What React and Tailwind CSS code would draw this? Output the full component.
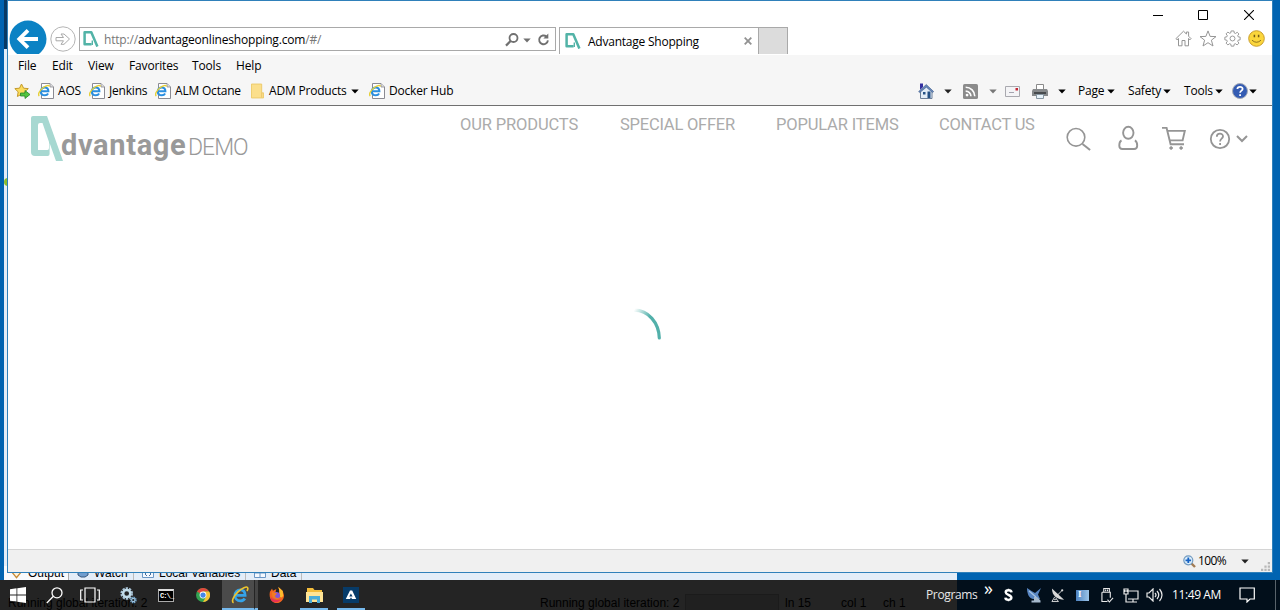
import React from "react";

const UI = "font-['Open_Sans','Noto_Sans',sans-serif]";

function LogoMark({ className }) {
  return (
    <svg viewBox="0 0 32 45" className={className} preserveAspectRatio="none">
      <path
        fillRule="evenodd"
        fill="#a7d8d1"
        d="M2 0H16L32 45H25L18.6 27V38Q18.6 40 16.6 40H4Q0 40 0 36V2Q0 0 2 0ZM9 7Q7 7 7 9V34H16.5Q18 34 18 32V26L11.5 7Z"
      />
    </svg>
  );
}

function Favicon({ className }) {
  return (
    <svg viewBox="0 0 16 16" className={className} fill="none" stroke="#52b3a7">
      <path strokeWidth="2.5" strokeLinejoin="round" d="M8.6 13.2H1.6V1.3H8.3L14.4 15.6" />
      <path strokeWidth="1.4" d="M9.3 13.9V9.5" />
    </svg>
  );
}

function Caret({ className = "text-[#222]" }) {
  return (
    <svg viewBox="0 0 8 5" className={"h-[5px] w-[8px] shrink-0 " + className}>
      <path fill="currentColor" d="M0.3 0.5H7.7L4 4.5Z" />
    </svg>
  );
}

function BrowserE({ className }) {
  return (
    <svg viewBox="0 0 18 18" className={className}>
      <path
        fill="none"
        stroke="#35a3e8"
        strokeWidth="2.8"
        d="M4.2 9.4H14.1C14.2 5.6 12.3 3.9 9.4 3.9C6.2 3.9 4 6.3 4 9.4C4 12.5 6.2 14.9 9.3 14.9C11.4 14.9 12.9 14.1 13.8 12.5"
      />
      <path
        fill="none"
        stroke="#f0c52c"
        strokeWidth="1.6"
        d="M2.6 16.8C.2 15.6 2.2 10.4 7 5.8C11.3 1.7 15.6.2 16.6 1.6C17.1 2.4 16.8 3.7 16 5"
      />
    </svg>
  );
}

function PageIcon() {
  return (
    <svg viewBox="0 0 16 16" className="h-4 w-4 shrink-0">
      <path fill="#fff" stroke="#8b8b93" d="M3.5.5H12L15.5 4V15.5H3.5Z" />
      <path fill="#ddd" stroke="#8b8b93" strokeWidth=".8" d="M12 .5V4H15.5" />
      <path
        fill="none"
        stroke="#2b8fe0"
        strokeWidth="2"
        d="M3 8.3H10.4C10.4 5.7 9 4.4 6.8 4.4C4.5 4.4 2.8 6 2.8 8.4C2.8 10.8 4.5 12.2 6.8 12.2C8.3 12.2 9.5 11.6 10.1 10.5"
      />
      <path
        fill="none"
        stroke="#e6cf35"
        strokeWidth="1.4"
        d="M1.3 13C-.6 11.6 1.8 7.3 5 4.8C8 2.4 11 1.8 11.4 3.4"
      />
    </svg>
  );
}

function Bookmark({ children, className }) {
  return (
    <div className={"flex shrink-0 items-center gap-[4px] " + className}>
      <PageIcon />
      <span>{children}</span>
    </div>
  );
}

function TitleRow() {
  return (
    <div className="flex h-[54px] shrink-0 items-start bg-white">
      <div className="mt-[19px] h-[34px] w-[41px] shrink-0 overflow-hidden pl-[1px]">
        <svg viewBox="0 0 38 38" className="h-[38px] w-[38px]">
          <circle cx="19" cy="19" r="18.5" fill="#0b82c4" />
          <path
            fill="none"
            stroke="#fff"
            strokeWidth="3.8"
            d="M29 19H11M19 10.3L10.3 19L19 27.7"
          />
        </svg>
      </div>
      <svg viewBox="0 0 26 26" className="mt-[25px] h-[26px] w-[27px] shrink-0">
        <circle cx="13.5" cy="13" r="12.2" fill="#fff" stroke="#b4b4b4" />
        <path
          fill="#fff"
          stroke="#a9a9a9"
          d="M6.5 11.5H14L11.5 8H14.5L20 13L14.5 18.3H11.5L14 14.8H6.5Z"
        />
      </svg>
      <div className="ml-[3px] mt-[26px] flex h-[24px] w-[477px] shrink-0 items-center border border-[#a9a9a9] bg-white">
        <Favicon className="ml-[3px] h-[16px] w-[16px] shrink-0" />
        <span className="ml-[5px] mt-[1px] w-[401px] text-[12px] tracking-[-0.18px] text-[#777]">
          http://<span className="text-black">advantageonlineshopping.com</span>/#/
        </span>
        <svg viewBox="0 0 14 14" className="mt-[1px] h-[14px] w-[14px] shrink-0 text-[#707070]">
          <circle cx="8.5" cy="5" r="4" fill="none" stroke="currentColor" strokeWidth="1.8" />
          <path stroke="currentColor" strokeWidth="2.2" d="M5.6 8L1 12.6" />
        </svg>
        <Caret className="ml-[4px] mt-[2px] text-[#707070]" />
        <svg viewBox="0 0 14 14" className="ml-[6px] mt-[1px] h-[14px] w-[14px] shrink-0 text-[#707070]">
          <path
            fill="none"
            stroke="currentColor"
            strokeWidth="1.9"
            d="M9.4 3.5A4.4 4.4 0 1 0 10.9 7.4"
          />
          <path fill="currentColor" d="M11.3 .6V5.6H6.4Z" />
        </svg>
      </div>
      <div className="ml-[3px] mt-[26px] flex h-[27px] w-[200px] shrink-0 items-center border border-b-0 border-[#a9a9a9] bg-white">
        <Favicon className="ml-[5px] h-[16px] w-[16px] shrink-0" />
        <span className="ml-[7px] mt-[2px] w-[156px] whitespace-nowrap text-[12px] tracking-[-0.23px] text-black">
          Advantage Shopping
        </span>
        <svg viewBox="0 0 8 8" className="h-[8px] w-[8px] shrink-0">
          <path stroke="#929292" strokeWidth="1.8" d="M.7.7L7.3 7.3M7.3.7L.7 7.3" />
        </svg>
      </div>
      <div className="mt-[26px] h-[27px] w-[29px] shrink-0 border border-b-0 border-l-0 border-[#a9a9a9] bg-[#dcdcdc]" />
      <div className="ml-auto flex flex-col items-end">
        <div className="mt-[9px] flex items-center pr-[18px] text-black">
          <svg viewBox="0 0 10 10" className="mr-[35px] h-[10px] w-[10px]">
            <path stroke="currentColor" d="M0 5.5H10" />
          </svg>
          <svg viewBox="0 0 10 10" className="mr-[36px] h-[10px] w-[10px]">
            <path fill="none" stroke="currentColor" d="M.5.5H9.5V9.5H.5Z" />
          </svg>
          <svg viewBox="0 0 10 10" className="h-[10px] w-[10px]">
            <path stroke="currentColor" strokeWidth="1.1" d="M0 0L10 10M10 0L0 10" />
          </svg>
        </div>
        <div className="mt-[10px] flex items-center gap-[7px] pr-[7px] text-[#959595]">
          <svg viewBox="0 0 17 17" className="h-[17px] w-[17px]" fill="#fff" stroke="currentColor">
            <path d="M8.5 1.2L.9 8.7L2 9.8L3.5 8.5V15.8H7V10.5H10V15.8H13.5V8.5L15 9.8L16.1 8.7L13.6 6.2V2H11.4V4Z" />
          </svg>
          <svg viewBox="0 0 18 17" className="h-[17px] w-[18px]" fill="#fff" stroke="currentColor">
            <path d="M9 .9L11.1 6.4L17 6.6L12.4 10.2L14 16L9 12.7L4 16L5.6 10.2L1 6.6L6.9 6.4Z" />
          </svg>
          <svg viewBox="0 0 18 18" className="h-[17px] w-[17px]" fill="#fff" stroke="currentColor">
            <path d="M7.5 1H10.5L10.9 3.2L12.1 3.7L14 2.4L15.8 4.2L14.5 6L15 7.2L17.1 7.6V10.4L15 10.8L14.5 12L15.8 13.9L13.9 15.8L12 14.5L10.8 15L10.4 17.1H7.6L7.2 15L6 14.5L4.1 15.8L2.2 13.9L3.5 12L3 10.8L.9 10.4V7.6L3 7.2L3.5 6L2.2 4.1L4.1 2.2L6 3.5L7.2 3Z" />
            <circle cx="9" cy="9" r="2.6" />
          </svg>
          <svg viewBox="0 0 17 17" className="h-[17px] w-[17px]">
            <circle cx="8.5" cy="8.5" r="7.8" fill="#fbd63c" stroke="#c99d2c" />
            <path stroke="#755b16" strokeWidth="1.5" d="M6.4 4.8V7.3M10.6 4.8V7.3" />
            <path fill="none" stroke="#755b16" strokeWidth=".8" d="M4 10.2Q8.5 14.3 13 10.2" />
          </svg>
        </div>
      </div>
    </div>
  );
}

function MenuRow() {
  return (
    <div className="flex h-[22px] shrink-0 items-center pl-[10px] text-[12px] tracking-[-0.15px] text-black">
      <span className="w-[34px]">File</span>
      <span className="w-[36px]">Edit</span>
      <span className="w-[41px]">View</span>
      <span className="w-[63px]">Favorites</span>
      <span className="w-[44px]">Tools</span>
      <span>Help</span>
    </div>
  );
}

function CommandBar() {
  return (
    <div className="flex h-[28px] shrink-0 items-center whitespace-nowrap pl-[6px] text-[12px] tracking-[-0.2px] text-black">
      <svg viewBox="0 0 17 16" className="mr-[7px] h-[16px] w-[17px] shrink-0">
        <path
          fill="#fbdc5c"
          stroke="#c49a2b"
          d="M7.5 1L9.6 5.2L14.3 5.6L10.9 8.9L11.9 13.5L7.5 11.2L3.4 13.5L4.2 8.9L.8 5.6L5.5 5.2Z"
        />
        <path fill="#53c43e" stroke="#24852a" strokeWidth=".8" d="M6.5 10H11V7.5L16 11.5L11 15.5V13H6.5Z" />
      </svg>
      <Bookmark className="w-[51px]">AOS</Bookmark>
      <Bookmark className="w-[66px]">Jenkins</Bookmark>
      <Bookmark className="w-[96px]">ALM Octane</Bookmark>
      <svg viewBox="0 0 14 16" className="mr-[5px] h-[16px] w-[13px] shrink-0">
        <path fill="#fbdf8c" stroke="#ecc968" d="M.5.5H11.5V10H13.5V15.5H.5Z" />
        <path stroke="#eac466" d="M11.5 10V15" />
      </svg>
      <span className="w-[82px] shrink-0">ADM Products</span>
      <Caret className="mr-[10px]" />
      <Bookmark className="w-[90px]">Docker Hub</Bookmark>

      <div className="ml-auto flex items-center">
        <svg viewBox="0 0 16 16" className="h-[16px] w-[16px]">
          <path fill="#e3edf7" stroke="#6c7f98" d="M2.5 8V15.5H14V8L8.5 3Z" />
          <path fill="#6787b8" stroke="#435f8c" strokeWidth=".6" d="M8.3 1.5L.6 8.6L1.8 9.6L8.3 4.2L14.6 9.6L15.7 8.6Z" />
          <path fill="#3430a0" d="M2 .5H5V4L2 6.8Z" />
          <path fill="#255185" d="M9.5 8.5H12.5V15H9.5ZM5 9H7.5V11.5H5Z" />
        </svg>
        <Caret className="ml-[10px] mr-[11px] text-[#222]" />
        <svg viewBox="0 0 14 14" className="mt-[1px] h-[15px] w-[15px]">
          <rect width="14" height="14" rx="1.5" fill="#8b8b8b" />
          <g fill="none" stroke="#fff" strokeWidth="1.5">
            <path d="M2.5 6.6A4.9 4.9 0 0 1 7.4 11.5M2.5 3A8.5 8.5 0 0 1 11 11.5" />
          </g>
          <circle cx="3.8" cy="10.3" r="1.3" fill="#fff" />
        </svg>
        <Caret className="ml-[11px] mr-[8px] text-[#777]" />
        <svg viewBox="0 0 15 11" className="h-[11px] w-[15px]">
          <path fill="#f4f4f6" stroke="#a9a9af" d="M.5.5H14.5V10.5H.5Z" />
          <path fill="#c42836" d="M10.5 2H13V4.5H10.5Z" />
          <path stroke="#a4a4af" d="M4 6.5H9" />
        </svg>
        <svg viewBox="0 0 16 15" className="ml-[12px] h-[15px] w-[16px]">
          <path fill="#fff" stroke="#8a8a8a" d="M4.5.5H11.5V6H4.5Z" />
          <path fill="#86898b" d="M1 5H15L16 7V12H0V7Z" />
          <path fill="#484b4e" d="M2 8H14V10H2Z" />
          <path fill="#e7f2fa" stroke="#8796a1" d="M4.5 10.5H11.5V14.5H4.5Z" />
        </svg>
        <Caret className="ml-[10px] mr-[12px]" />
        <span className="w-[29px]">Page</span>
        <Caret className="mr-[13px]" />
        <span className="w-[35px]">Safety</span>
        <Caret className="mr-[13px]" />
        <span className="w-[31px]">Tools</span>
        <Caret className="mr-[9px]" />
        <svg viewBox="0 0 16 16" className="h-[16px] w-[16px]">
          <circle cx="8" cy="8" r="7.5" fill="#345cb3" stroke="#a5acb8" />
          <path fill="none" stroke="#fff" strokeWidth="1.8" d="M5.4 6C5.5 3 10.8 3.1 10.6 6C10.5 7.6 8.1 7.7 8.1 9.8M8.1 11.2V13" />
        </svg>
        <Caret className="ml-[1px] mr-[15px]" />
      </div>
    </div>
  );
}

function SiteHeader() {
  return (
    <header className="flex h-[70px] items-start font-[Roboto,sans-serif]">
      <div className="ml-[23px] mt-[10px] flex h-[50px] w-[429px] items-start">
        <LogoMark className="h-[45px] w-[32px] shrink-0" />
        <span className="-ml-[2px] mt-[12px] w-[127px] shrink-0 text-[29px] font-bold leading-[34px] tracking-[0.65px] text-[#999]">
          dvantage
        </span>
        <span className="mt-[17px] text-[23px] font-light leading-[30px] tracking-[-1px] text-[#999]">
          DEMO
        </span>
      </div>
      <nav className="mt-[9px] flex whitespace-nowrap text-[16.5px] font-normal leading-[20px] tracking-[-0.14px] text-[#ababab]">
        <span className="w-[160px]">OUR PRODUCTS</span>
        <span className="w-[156px] tracking-[-0.22px]">SPECIAL OFFER</span>
        <span className="w-[163px] tracking-[-0.16px]">POPULAR ITEMS</span>
        <span className="w-[127px] tracking-[-0.25px]">CONTACT US</span>
      </nav>
      <div className="mt-[18px] flex items-start text-[#959595]">
        <svg viewBox="0 0 26 28" className="h-[28px] w-[26px]" fill="none" stroke="currentColor">
          <circle cx="10" cy="13.3" r="8.8" strokeWidth="1.6" />
          <path strokeWidth="2" d="M16.5 20L24.1 26" />
        </svg>
        <svg viewBox="0 0 22 28" className="ml-[25px] h-[28px] w-[22px]" fill="none" stroke="currentColor" strokeWidth="1.9">
          <ellipse cx="11.3" cy="8.8" rx="5.2" ry="6" />
          <path d="M4.5 16.3C2.6 17.3 2.2 19 2.3 21.8C2.3 24.2 3.6 25 5.4 25H17.1C18.9 25 20.2 24.2 20.2 21.8C20.3 19 19.8 17.3 17.9 16.3" />
        </svg>
        <svg viewBox="0 0 25 28" className="ml-[23px] h-[28px] w-[25px]" fill="none" stroke="currentColor" strokeWidth="1.9">
          <path d="M0 3.9H4.6L8.6 20.2H22M6 6.9H22.8L20.6 16.4H8" />
          <circle cx="9.1" cy="24" r="1.3" fill="currentColor" strokeWidth="1" />
          <circle cx="19.1" cy="24" r="1.3" fill="currentColor" strokeWidth="1" />
        </svg>
        <svg viewBox="0 0 22 28" className="ml-[22px] h-[28px] w-[22px]" fill="none" stroke="currentColor" strokeWidth="1.8">
          <circle cx="11" cy="15" r="9.2" />
          <path d="M7.8 12.8C7.8 8.6 14.2 8.8 14 12.4C13.9 14.6 11.1 14.8 11.1 17.4M11.1 19.1V21.1" />
        </svg>
        <svg viewBox="0 0 12 8" className="ml-[5px] mt-[11px] h-[8px] w-[12px]" fill="none" stroke="currentColor" strokeWidth="2">
          <path d="M1 1L6 6L11 1" />
        </svg>
      </div>
    </header>
  );
}

function Spinner() {
  return (
    <svg viewBox="0 0 30 33" className="ml-[626px] mt-[131px] h-[33px] w-[30px]" fill="none">
      <defs>
        <linearGradient id="arc" x1="0" y1="0" x2=".55" y2=".35">
          <stop offset="0" stopColor="#52b0aa" stopOpacity="0" />
          <stop offset="1" stopColor="#52b0aa" />
        </linearGradient>
      </defs>
      <path stroke="url(#arc)" strokeWidth="3.2" strokeLinecap="round" d="M0 3.2C14.4 3 24.9 16 25.3 31" />
    </svg>
  );
}

function StatusBar() {
  return (
    <div className="flex h-[23px] shrink-0 items-center border-t border-[#d4d4d4] bg-[#f0f0f0] text-[12px] text-black">
      <svg viewBox="0 0 13 13" className="ml-auto h-[13px] w-[13px]">
        <path stroke="#a27b53" strokeWidth="2.4" d="M8 8L12 12" />
        <circle cx="5.3" cy="5.3" r="4.5" fill="#dceefa" stroke="#729ac0" strokeWidth="1.2" />
        <path stroke="#1662c4" strokeWidth="1.8" d="M2.5 5.3H8.1M5.3 2.5V8.1" />
      </svg>
      <span className="ml-[2px] w-[43px] tracking-[-0.6px]">100%</span>
      <Caret />
      <svg viewBox="0 0 8 8" className="ml-[12px] mr-[2px] mt-[10px] h-[9px] w-[9px]" fill="#b8b8b8">
        <path d="M6 0H8V2H6ZM3 3H5V5H3ZM6 3H8V5H6ZM0 6H2V8H0ZM3 6H5V8H3ZM6 6H8V8H6Z" />
      </svg>
    </div>
  );
}

function BrowserWindow() {
  return (
    <div className="absolute left-[7px] top-0 flex h-[573px] w-[1266px] flex-col border border-[#2f80ba] bg-[#f6f6f6]">
      <TitleRow />
      <MenuRow />
      <CommandBar />
      <main className="min-h-0 flex-1 border-t border-[#707070] bg-white">
        <SiteHeader />
        <Spinner />
      </main>
      <StatusBar />
    </div>
  );
}

function BackgroundApp() {
  return (
    <div className="absolute left-[4px] top-0 h-[610px] w-[953px] bg-[#e3edf8] font-['Liberation_Sans',sans-serif] text-[12px] text-black">
      <div className="h-[49px] w-[3px] bg-[#083964]" />
      <div className="mt-[129px] h-[8px] w-[4px] rounded-l bg-[#8bbd2d]" />
      <div className="mt-[380px] flex h-[14px] items-center leading-[14px]">
        <div className="flex h-full w-[65px] items-center gap-[6px] border-r border-[#aaa] bg-[#f8fafc] pl-[7px]">
          <svg viewBox="0 0 12 12" className="h-[12px] w-[11px]">
            <path fill="#fff2d9" stroke="#c58a36" strokeWidth="1.5" d="M1 5H3V1H9V5H11L6 11Z" />
          </svg>
          <span>Output</span>
        </div>
        <div className="flex w-[65px] items-center gap-[5px] border-r border-[#bbb] pl-[8px]">
          <svg viewBox="0 0 12 12" className="h-[12px] w-[12px]">
            <path fill="#719dcd" stroke="#36567c" d="M1 2H11V8L8 10H4L1 8Z" />
          </svg>
          <span>Watch</span>
        </div>
        <div className="flex w-[112px] items-center gap-[5px] border-r border-[#bbb] pl-[8px]">
          <svg viewBox="0 0 12 12" className="h-[12px] w-[12px]">
            <path fill="#f4f9ff" stroke="#6b96c5" d="M.5 1H11.5V10.5H.5Z" />
            <path fill="none" stroke="#466f9f" d="M5 5L3 7L5 9M7 5L9 7L7 9" />
          </svg>
          <span className="whitespace-nowrap">Local Variables</span>
        </div>
        <div className="flex w-[56px] items-center gap-[5px] border-r border-[#bbb] pl-[8px]">
          <svg viewBox="0 0 12 12" className="h-[12px] w-[12px]">
            <path fill="#f4f9ff" stroke="#6b96c5" d="M.5 1H11.5V10.5H.5ZM6 1V10M1 6H11" />
          </svg>
          <span>Data</span>
        </div>
      </div>
    </div>
  );
}

function Task({ children, className }) {
  return (
    <div className={"flex h-[30px] shrink-0 items-center justify-center border-b-2 pt-[2px] " + className}>
      {children}
    </div>
  );
}

function ShadowStatus() {
  return (
    <div className="absolute left-0 top-0 flex h-[30px] w-[957px] items-center overflow-hidden bg-[#242424] pl-[8px] pt-[17px] font-['Liberation_Sans',sans-serif] text-[12px] leading-[15px] text-black">
      <span className="w-[532px] shrink-0">Running global iteration: 2</span>
      <span className="w-[145px] shrink-0">Running global iteration: 2</span>
      <span className="mr-[6px] h-[20px] w-[94px] shrink-0 border border-[#1b1b1b] bg-[#202020]" />
      <span className="w-[56px] shrink-0">ln 15</span>
      <span className="w-[42px] shrink-0">col 1</span>
      <span>ch 1</span>
    </div>
  );
}

function Taskbar() {
  return (
    <div className="absolute left-0 top-[580px] h-[30px] w-[1280px] bg-[#020f1b] text-white">
      <ShadowStatus />
      <div className="relative flex h-full items-center">
        <Task className="w-[36px] border-transparent">
          <svg viewBox="0 0 16 16" className="h-[16px] w-[16px]" fill="#fff">
            <path d="M0 2.3L6.5 1.3V7.5H0ZM7.3 1.2L16 0V7.5H7.3ZM0 8.4H6.5V14.6L0 13.7ZM7.3 8.4H16V16L7.3 14.8Z" />
          </svg>
        </Task>
        <Task className="w-[36px] border-transparent">
          <svg viewBox="0 0 17 17" className="h-[17px] w-[17px]" fill="none" stroke="#fff" strokeWidth="1.3">
            <circle cx="11" cy="5.8" r="5" />
            <path d="M7.4 9.3L.8 16" />
          </svg>
        </Task>
        <Task className="w-[36px] border-transparent">
          <svg viewBox="0 0 20 16" className="h-[16px] w-[20px]" fill="none" stroke="#fff" strokeWidth="1.2">
            <path d="M5 1H15V15H5ZM3 3H.7V13H3M17 3H19.3V13H17" />
          </svg>
        </Task>
        <Task className="w-[40px] border-transparent">
          <svg viewBox="0 0 17 17" className="h-[17px] w-[17px]" fill="none">
            <circle cx="6.7" cy="6.5" r="5.4" stroke="#a9c4d7" strokeWidth="1.8" strokeDasharray="2.3 1.1" />
            <circle cx="6.7" cy="6.5" r="3.6" stroke="#c1dbe9" strokeWidth="2.5" />
            <circle cx="13.3" cy="13" r="2.7" stroke="#75a8cf" strokeWidth="1.4" strokeDasharray="1.4 .7" />
            <circle cx="13.3" cy="13" r="1.7" stroke="#9dc5e1" strokeWidth="1.2" />
          </svg>
        </Task>
        <Task className="w-[36px] border-transparent">
          <div className="h-[13px] w-[16px] border border-[#aaa] border-t-[2px] border-t-[#ddd] bg-black pl-[1px] pt-[1px] font-['Liberation_Mono',monospace] text-[7px] font-bold leading-[8px] tracking-[-0.9px]">
            C:\_
          </div>
        </Task>
        <Task className="w-[38px] border-transparent">
          <svg viewBox="0 0 16 16" className="h-[14px] w-[14px]">
            <circle cx="8" cy="8" r="8" fill="#33a252" />
            <path fill="#df493c" d="M8 8L1.1 4A8 8 0 0 1 15 4H8Z" />
            <path fill="#f5c235" d="M8 4H15A8 8 0 0 1 8 16L11.5 10Z" />
            <circle cx="8" cy="8" r="3.9" fill="#fff" />
            <circle cx="8" cy="8" r="3" fill="#4387e9" />
          </svg>
        </Task>
        <Task className="w-[32px] border-[#76b9ed] bg-[#4b4b4b] pl-[3px]">
          <BrowserE className="h-[18px] w-[18px]" />
        </Task>
        <div className="h-[30px] w-[4px] shrink-0 border-b-2 border-l border-b-[#76b9ed] border-l-[#242424] bg-[#444]" />
        <Task className="w-[38px] border-transparent">
          <svg viewBox="0 0 17 17" className="h-[16px] w-[16px]">
            <path fill="#f3661e" d="M1 5L3.2 1.5L4.2 4L7.8 2L7 5.2L10.6 8L11 4.3L10 0L14.6 4.2L16 8.7C16 13.3 12.5 17 8.2 17C3.2 17-.5 12.2 1 5Z" />
            <path fill="#e73253" d="M1 7C1 13 7 15 13 13C10 17 5 17.5 2.2 13.8Z" />
            <path fill="#fcbc2e" d="M10 0L14.6 4.2L15 9C14 12 12 11.5 11.2 9.4L11 4.3Z" />
            <circle cx="8" cy="9" r="3.8" fill="#8656d2" />
            <path fill="#f37b22" d="M3 5L8.5 7L6.3 9.5C7 12 10 12.2 12 10.8C10 14 4 13 3.4 9Z" />
          </svg>
        </Task>
        <Task className="ml-[4px] w-[28px] border-[#76b9ed]">
          <svg viewBox="0 0 17 15" className="h-[15px] w-[17px]">
            <path fill="#f3bd3b" d="M1 0H7L8.5 2H16V5H1Z" />
            <path fill="#ffe495" d="M0 4H17V14H0Z" />
            <path fill="#49acd9" d="M3 8H14V15H11V11.5H6V15H3Z" />
          </svg>
        </Task>
        <Task className="ml-[9px] w-[28px] border-[#76b9ed]">
          <svg viewBox="0 0 16 16" className="h-[16px] w-[16px]">
            <rect width="16" height="16" fill="#073b68" />
            <path
              fill="#fff"
              fillRule="evenodd"
              d="M7 3.5H9.2L13.2 12H9L8 10.2L7 12H2.8ZM7.9 6.5L6.2 9.6H9.6Z"
            />
          </svg>
        </Task>
        <span className="ml-auto w-[58px] text-[12px] leading-[30px] tracking-[-0.35px] text-[#e7e7e7]">Programs</span>
        <span className="mb-[15px] w-[20px] text-[18px] leading-[14px]">»</span>
        <svg viewBox="0 0 10 14" className="h-[14px] w-[9px]" fill="none" stroke="#fff" strokeWidth="2.7">
          <path d="M8.4 4C8 1 1.9 1 1.9 4C2 7 8.2 6.6 8.2 10C8.2 13.3 1.8 13.2 1.5 10" />
          <path strokeWidth="1.6" d="M5 0V2M5 12V14" />
        </svg>
        <svg viewBox="0 0 16 16" className="ml-[13px] h-[16px] w-[16px]">
          <path fill="#5785c2" d="M1 1L5.5 4L9 6L15 1L12 7.5L14 12H7C3 11 1 7 1 1Z" />
          <path fill="#a6b9cd" d="M8 10H11L14.5 13.5V15.5H5.5V13.5H8Z" />
          <path stroke="#a8c5e3" strokeWidth="1.2" d="M3 4L10 10" />
        </svg>
        <svg viewBox="0 0 15 16" className="ml-[9px] h-[16px] w-[14px]">
          <path fill="#d8d8d8" d="M1 1L14 13C7 13 1 9 1 1Z" />
          <path fill="none" stroke="#ddd" d="M7 8L12 3M4 10L1 15H8L5 11M3 13H6" />
          <circle cx="12" cy="3" r="1.2" fill="#ddd" />
        </svg>
        <div className="ml-[11px] flex h-[11px] w-[13px] items-center bg-gradient-to-r from-[#4d83c0] to-[#9cc4e8] pl-[2px] font-['Liberation_Serif',serif] text-[9px] font-bold">
          I
        </div>
        <svg viewBox="0 0 14 17" className="ml-[12px] h-[17px] w-[13px]" fill="none" stroke="#e9e9e9" strokeWidth="1.2">
          <path d="M3 5V1H9V5M5 2V4M7 2V4M1 5H10V11M1 5V15H7M7 13L9 15.5L13 11" />
        </svg>
        <svg viewBox="0 0 16 15" className="ml-[9px] h-[15px] w-[16px]" fill="none" stroke="#e9e9e9" strokeWidth="1.2">
          <path d="M5 3H15V11H5M10 11V14M6 14H14M1 1H5V6H1ZM3 6V14H8M2 2V4M4 2V4" />
        </svg>
        <svg viewBox="0 0 17 14" className="ml-[7px] h-[14px] w-[17px]" fill="none" stroke="#e9e9e9" strokeWidth="1.2">
          <path d="M1 5H3L7 1V13L3 9H1ZM9 5Q11 7 9 9M11 3Q14.5 7 11 11M13.5 1Q18.5 7 13.5 13" />
        </svg>
        <span className="ml-[9px] w-[67px] whitespace-nowrap text-[12px] leading-[30px] tracking-[-0.4px]">11:49 AM</span>
        <svg viewBox="0 0 16 16" className="h-[16px] w-[16px]" fill="none" stroke="#fff" strokeWidth="1.2">
          <path d="M1 1H15.3V12H11L8 15V12H1Z" />
        </svg>
        <div className="ml-[20px] h-[30px] w-[5px] border-l border-[#59636b]" />
      </div>
    </div>
  );
}

export default function App() {
  return (
    <div className={"relative h-[610px] w-[1280px] overflow-hidden bg-[#0063b1] " + UI}>
      <BackgroundApp />
      <BrowserWindow />
      <Taskbar />
    </div>
  );
}
